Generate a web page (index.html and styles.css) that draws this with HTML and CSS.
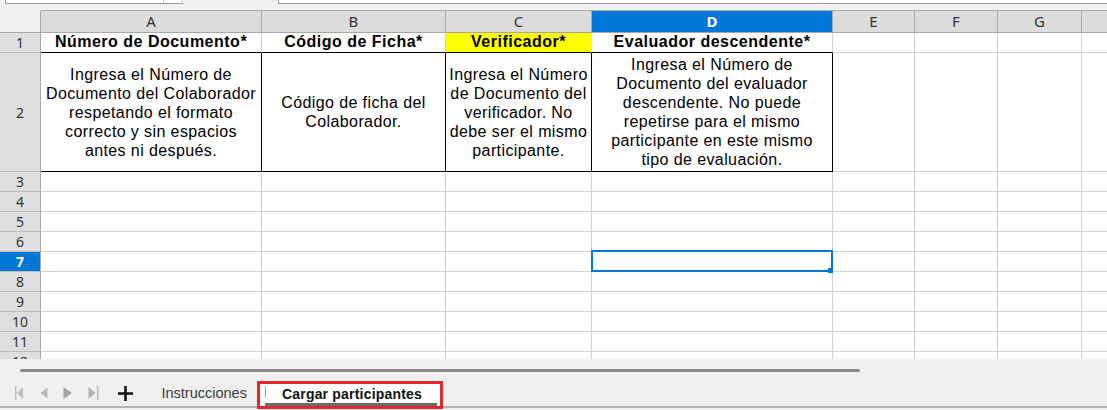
FILE: index.html
```html
<!DOCTYPE html>
<html lang="es">
<head>
  <meta charset="UTF-8" />
  <meta name="viewport" content="width=device-width, initial-scale=1.0"/>
  <title>Cargar participantes</title>
  <link rel="stylesheet" href="styles.css">
</head>
<body>
  <div class="topbar">
    <div class="namebox"><span class="namebox-drop"></span></div>
    <div class="formula"></div>
  </div>

  <div class="sheet">
    <div class="row head">
      <div class="corner"></div>
      <div class="ch">A</div>
      <div class="ch">B</div>
      <div class="ch">C</div>
      <div class="ch on">D</div>
      <div class="ch">E</div>
      <div class="ch">F</div>
      <div class="ch">G</div>
      <div class="ch"></div>
    </div>

    <div class="row">
      <div class="rh">1</div>
      <div class="title edge-b">Número de Documento*</div>
      <div class="title edge-b">Código de Ficha*</div>
      <div class="title edge-b hl">Verificador*</div>
      <div class="title edge-b">Evaluador descendente*</div>
      <div></div><div></div><div></div><div></div>
    </div>

    <div class="row tall">
      <div class="rh">2</div>
      <div class="note edge-b edge-r">Ingresa el Número de<br>Documento del Colaborador<br>respetando el formato<br>correcto y sin espacios<br>antes ni después.</div>
      <div class="note edge-b edge-r">Código de ficha del<br>Colaborador.</div>
      <div class="note edge-b edge-r">Ingresa el Número<br>de Documento del<br>verificador. No<br>debe ser el mismo<br>participante.</div>
      <div class="note edge-b edge-r">Ingresa el Número de<br>Documento del evaluador<br>descendente. No puede<br>repetirse para el mismo<br>participante en este mismo<br>tipo de evaluación.</div>
      <div></div><div></div><div></div><div></div>
    </div>

    <div class="row"><div class="rh">3</div><div></div><div></div><div></div><div></div><div></div><div></div><div></div><div></div></div>
    <div class="row"><div class="rh">4</div><div></div><div></div><div></div><div></div><div></div><div></div><div></div><div></div></div>
    <div class="row"><div class="rh">5</div><div></div><div></div><div></div><div></div><div></div><div></div><div></div><div></div></div>
    <div class="row"><div class="rh">6</div><div></div><div></div><div></div><div></div><div></div><div></div><div></div><div></div></div>
    <div class="row"><div class="rh on">7</div><div></div><div></div><div></div><div class="sel"></div><div></div><div></div><div></div><div></div></div>
    <div class="row"><div class="rh">8</div><div></div><div></div><div></div><div></div><div></div><div></div><div></div><div></div></div>
    <div class="row"><div class="rh">9</div><div></div><div></div><div></div><div></div><div></div><div></div><div></div><div></div></div>
    <div class="row"><div class="rh">10</div><div></div><div></div><div></div><div></div><div></div><div></div><div></div><div></div></div>
    <div class="row"><div class="rh">11</div><div></div><div></div><div></div><div></div><div></div><div></div><div></div><div></div></div>
    <div class="row"><div class="rh">12</div><div></div><div></div><div></div><div></div><div></div><div></div><div></div><div></div></div>
  </div>

  <div class="footer">
    <div class="hscroll"></div>
    <div class="tabs">
      <div class="nav">
        <svg width="12" height="16" viewBox="0 0 12 16"><rect x="2" y="1" width="1.4" height="14" fill="#bdbdbd"/><path d="M10 2 L4 8 L10 14 Z" fill="#bdbdbd"/></svg>
        <svg width="12" height="16" viewBox="0 0 12 16"><path d="M9.5 2.5 L2.5 8 L9.5 13.5 Z" fill="#b8b8b8"/></svg>
        <svg width="12" height="16" viewBox="0 0 12 16"><path d="M1.5 2 L10 8 L1.5 14 Z" fill="#a4a4a4"/></svg>
        <svg width="12" height="16" viewBox="0 0 12 16"><path d="M1.5 2 L8.5 8 L1.5 14 Z" fill="#b4b4b4"/><rect x="10" y="1" width="1.4" height="14" fill="#b4b4b4"/></svg>
      </div>
      <div class="add">
        <svg width="17" height="17" viewBox="0 0 17 17"><path d="M8.5 1v15M1 8.5h15" stroke="#111" stroke-width="2.6"/></svg>
      </div>
      <div class="tab">Instrucciones</div>
      <div class="tab active"><span>Cargar participantes</span></div>
    </div>
  </div>
</body>
</html>
```

FILE: styles.css
```css
* {
  box-sizing: border-box;
}

body {
  margin: 0;
  width: 1107px;
  height: 410px;
  overflow: hidden;
  background-color: #f0f0f0;
  font-family: "Liberation Sans", Arial, sans-serif;
  color: #000;
}

/* name box + formula input, only their lower edge shows */
.topbar {
  display: flex;
  height: 10px;
}

.namebox {
  display: flex;
  justify-content: flex-end;
  width: 178px;
  height: 4px;
  margin-left: 5px;
  background-color: #fff;
  border-left: 1px solid #9a9a9a;
  border-bottom: 1px solid #9a9a9a;
}

.namebox-drop {
  width: 20px;
  height: 3px;
  border-left: 1px solid #c8c8c8;
  border-right: 1px solid #c8c8c8;
}

.formula {
  flex: 1;
  height: 4px;
  margin-left: 95px;
  background-color: #fff;
  border-left: 1px solid #9a9a9a;
  border-bottom: 1px solid #9a9a9a;
}

/* grid */
.sheet {
  height: 349px;
  overflow: hidden;
}

.row {
  display: grid;
  grid-template-columns: 41px 221px 184px 146px 241px 82px 83px 84px 84px;
  height: 20px;
  background-color: #fff;
}

.row.head {
  height: 23px;
  background-color: #f0f0f0;
}

.row.tall {
  height: 119px;
}

.row > div {
  border-right: 1px solid #d2d2d2;
  border-bottom: 1px solid #d2d2d2;
}

.row > .corner {
  border-top: 1px solid transparent;
  border-right-color: #a8a8a8;
  border-bottom-color: #a8a8a8;
}

.row > .ch {
  background-color: #dddddd;
  border-top: 1px solid #a8a8a8;
  border-right-color: #a8a8a8;
  border-bottom-color: #a8a8a8;
  text-align: center;
  font-family: "Noto Sans", sans-serif;
  font-size: 15px;
  line-height: 20px;
  color: #333;
}

.row > .rh {
  display: flex;
  align-items: center;
  justify-content: center;
  background-color: #dedede;
  border-right-color: #a8a8a8;
  border-bottom-color: #bcbcbc;
  font-family: "Noto Sans", sans-serif;
  font-size: 14px;
  line-height: 19px;
  color: #333;
}

.row > .on {
  background-color: #0078d7;
  color: #fff;
  font-weight: bold;
}

.title {
  font-weight: bold;
  font-size: 16px;
  letter-spacing: 0.5px;
  line-height: 18px;
  text-align: center;
  white-space: nowrap;
}

.note {
  display: flex;
  align-items: center;
  justify-content: center;
  text-align: center;
  font-size: 16px;
  letter-spacing: 0.4px;
  line-height: 19px;
  white-space: nowrap;
}

.row > .edge-b {
  border-bottom-color: #000;
}

.row > .edge-r {
  border-right-color: #000;
}

.row > .hl {
  background-color: #ffff00;
  border-right-color: #ffff00;
}

/* cursor cell */
.sel {
  position: relative;
}

.sel::before {
  content: "";
  position: absolute;
  top: -2px;
  left: -1px;
  right: -1px;
  bottom: -1px;
  border: 2px solid #0078d7;
}

.sel::after {
  content: "";
  position: absolute;
  right: -1px;
  bottom: -2px;
  width: 5px;
  height: 5px;
  background-color: #0078d7;
}

/* sheet tabs */
.footer {
  height: 51px;
}

.hscroll {
  width: 840px;
  height: 3px;
  margin: 10px 0 0 20px;
  background-color: #898989;
  border-radius: 2px;
}

.tabs {
  display: flex;
  align-items: center;
  height: 28px;
  margin-top: 8px;
  border-bottom: 2px solid #b2b2b2;
}

.nav {
  display: flex;
  gap: 12.5px;
  padding-left: 13px;
}

.nav svg, .add svg {
  display: block;
}

.add {
  margin-left: 18px;
}

.tab {
  margin-left: 28px;
  font-size: 14.5px;
  line-height: 26px;
  color: #3a3a3a;
}

.tab.active {
  align-self: flex-start;
  width: 186px;
  height: 28px;
  margin: 1px 0 0 10px;
  padding: 2px 3px 0 5px;
  border: 3px solid #e3262c;
  background-color: #fff;
  font-size: 14px;
  font-weight: bold;
  line-height: 17px;
  color: #111;
}

.tab.active span {
  display: block;
  height: 20px;
  padding-left: 17px;
  border-bottom: 3px solid #6b6b6b;
  background: linear-gradient(#a8a8a8, #a8a8a8) no-repeat 0 0 / 1px 12px;
  letter-spacing: 0.2px;
}
```
